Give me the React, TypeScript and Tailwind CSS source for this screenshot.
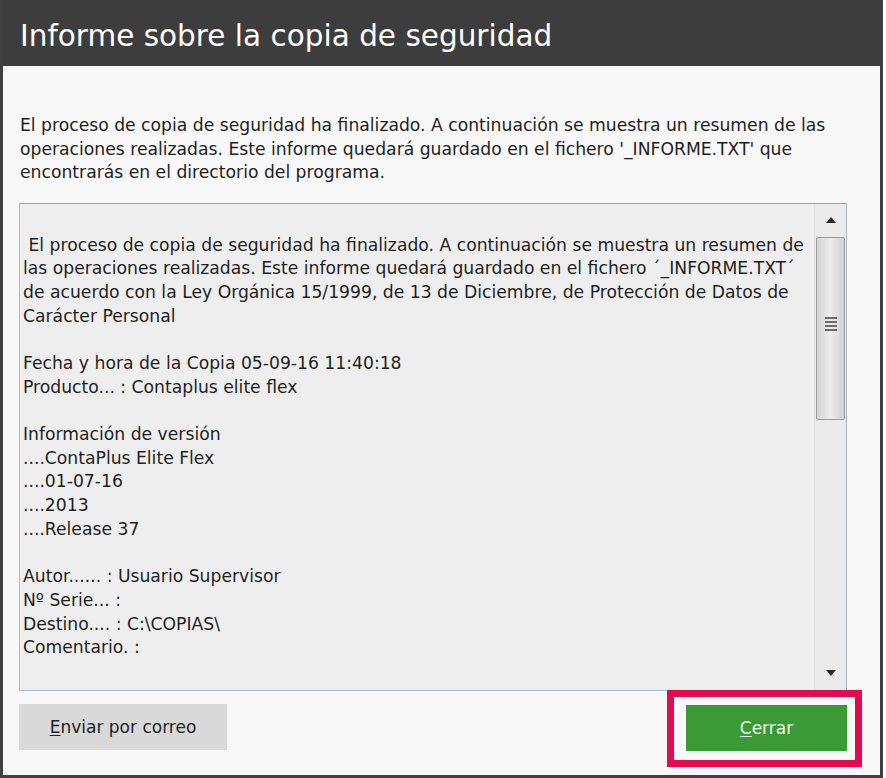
import React from 'react';

const reportLines: string[] = [
  ' El proceso de copia de seguridad ha finalizado. A continuación se muestra un resumen de',
  'las operaciones realizadas. Este informe quedará guardado en el fichero ´_INFORME.TXT´',
  'de acuerdo con la Ley Orgánica 15/1999, de 13 de Diciembre, de Protección de Datos de',
  'Carácter Personal',
  '',
  'Fecha y hora de la Copia 05-09-16 11:40:18',
  'Producto... : Contaplus elite flex',
  '',
  'Información de versión',
  '....ContaPlus Elite Flex',
  '....01-07-16',
  '....2013',
  '....Release 37',
  '',
  'Autor...... : Usuario Supervisor',
  'Nº Serie... :',
  'Destino.... : C:\\COPIAS\\',
  'Comentario. :',
];

const ScrollBar: React.FC = () => {
  return (
    <div className="w-[32px] flex flex-col bg-[#ebebeb] border-l border-[#e2e2e2]">
      <div className="h-[33px] flex items-center justify-center">
        <svg width="10" height="6" viewBox="0 0 10 6">
          <path d="M0 6 L5 0 L10 6 Z" fill="#2a2a2a" />
        </svg>
      </div>
      <div className="mx-[1px] h-[183px] rounded-[2px] border border-[#9d9d9d] bg-gradient-to-r from-[#d4d4d4] via-[#ececec] to-[#d0d0d0] flex items-center justify-center">
        <div className="flex flex-col gap-[2px] -mt-[8px]">
          <div className="w-[12px] h-[2px] bg-[#6b6b6b]" />
          <div className="w-[12px] h-[2px] bg-[#6b6b6b]" />
          <div className="w-[12px] h-[2px] bg-[#6b6b6b]" />
          <div className="w-[12px] h-[2px] bg-[#6b6b6b]" />
        </div>
      </div>
      <div className="flex-1" />
      <div className="h-[34px] flex items-center justify-center">
        <svg width="10" height="6" viewBox="0 0 10 6">
          <path d="M0 0 L5 6 L10 0 Z" fill="#2a2a2a" />
        </svg>
      </div>
    </div>
  );
};

export default function App() {
  return (
    <div className="w-[886px] h-[778px] bg-white" style={{ fontFamily: '"DejaVu Sans", Verdana, sans-serif' }}>
      <div className="w-[883px] h-[778px] flex flex-col border-x-[3px] border-b-[3px] border-[#404040] bg-[#f8f8f8]">
        <div className="h-[66px] shrink-0 bg-[#3d3d3d] pt-[22px] pl-[17px]">
          <h1 className="text-[29.5px] leading-[29px] text-white font-normal">Informe sobre la copia de seguridad</h1>
        </div>

        <div className="mt-[48px] pl-[17px] text-[17.2px] leading-[23.5px] text-[#1e1e1e] whitespace-nowrap">
          <div>El proceso de copia de seguridad ha finalizado. A continuación se muestra un resumen de las</div>
          <div>operaciones realizadas. Este informe quedará guardado en el fichero '_INFORME.TXT' que</div>
          <div>encontrarás en el directorio del programa.</div>
        </div>

        <div className="ml-[16px] mt-[18px] w-[828px] h-[488px] border border-[#a6bccf] border-t-[#8ea6bd] bg-[#eeeeee] flex">
          <div className="flex-1 pt-[30px] pl-[3px] text-[17.2px] leading-[23.7px] text-[#1e1e1e] overflow-hidden">
            {reportLines.map((line, i) => (
              <div key={i} className="whitespace-pre h-[23.7px]">
                {line}
              </div>
            ))}
          </div>
          <ScrollBar />
        </div>

        <div className="mt-[13px] flex items-start justify-between pl-[16px] pr-[33px]">
          <button className="w-[208px] h-[46px] pt-[3px] bg-[#d9d9d9] text-[17px] text-[#1e1e1e]">
            <span className="underline underline-offset-2">E</span>nviar por correo
          </button>
          <div className="relative mt-[1px]">
            <div className="absolute -left-[19px] -right-[15px] -top-[15px] -bottom-[16px] border-[7px] border-[#e00b50]" />
            <button className="relative w-[161px] h-[46px] pt-[3px] bg-[#3a9b36] text-[17px] text-[#eef8ec]">
              <span className="underline underline-offset-2">C</span>errar
            </button>
          </div>
        </div>
      </div>
    </div>
  );
}
